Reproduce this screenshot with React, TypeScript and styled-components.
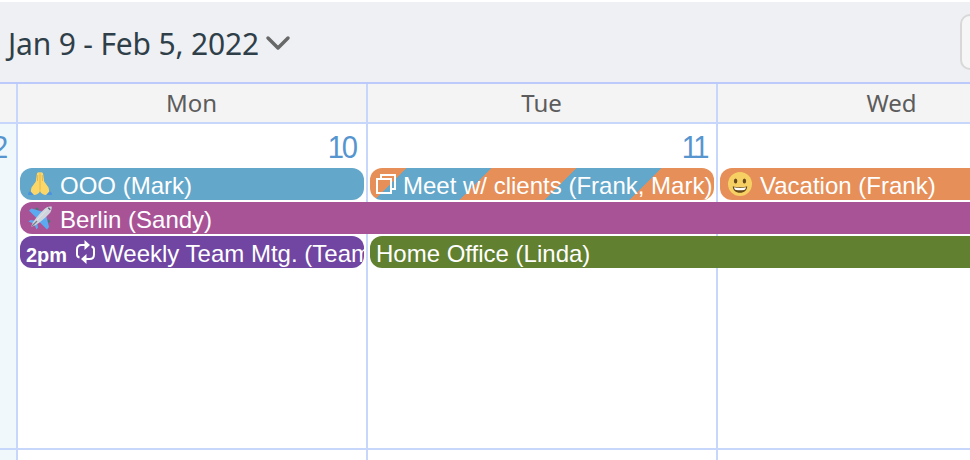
import React from "react";
import styled, { createGlobalStyle } from "styled-components";

const GlobalStyle = createGlobalStyle`
  html, body { margin: 0; background: #fff; overflow: hidden; }
  *, *::before, *::after { box-sizing: border-box; }
`;

const line = "#c6d7fb";

const Page = styled.main`
  width: 970px;
  height: 460px;
  padding-top: 2px;
  overflow: hidden;
  display: flex;
  flex-direction: column;
  font-family: "Liberation Sans", Arial, sans-serif;
`;

const Toolbar = styled.header`
  flex: none;
  height: 82px;
  background: #eff0f3;
  border-bottom: 2px solid #bccafb;
  display: flex;
  align-items: center;
  justify-content: space-between;
  padding-left: 8px;
`;

const RangeButton = styled.div`
  display: flex;
  align-items: center;
  gap: 8px;
`;

const Title = styled.h1`
  margin: 3px 0 0;
  width: 250px;
  white-space: nowrap;
  font: 400 30px/40px "Noto Sans", "Open Sans", sans-serif;
  letter-spacing: -0.17px;
  color: #2f3f49;
`;

const ToolButton = styled.div`
  flex: none;
  width: 60px;
  height: 56px;
  margin: 0 -50px 1px 0;
  border: 2px solid #d8d8d8;
  border-radius: 10px;
  background: #f6f6f6;
`;

const columns = "18px repeat(3, 350px)";

const DayHeader = styled.div`
  flex: none;
  display: grid;
  grid-template-columns: ${columns};
  height: 40px;
  background: #f4f4f4;
  border-bottom: 2px solid ${line};
`;

const DayName = styled.div`
  border-right: 2px solid ${line};
  text-align: center;
  font: 400 24px/37px "Noto Sans", "Open Sans", sans-serif;
  padding-right: 1px;
  color: #5c5c5c;
`;

const Week = styled.section`
  flex: none;
  display: grid;
  grid-template-columns: ${columns};
  grid-template-rows: 44px repeat(3, 32px) 1fr;
  row-gap: 2px;
  height: 326px;
  border-bottom: 2px solid ${line};
`;

const DayCell = styled.div<{ $col: number; $weekend?: boolean }>`
  grid-column: ${(p) => p.$col};
  grid-row: 1 / -1;
  border-right: 2px solid ${line};
  background: ${(p) => (p.$weekend ? "#f0f8fc" : "#fff")};
  display: flex;
  justify-content: flex-end;
  padding-right: 9px;
`;

const DayNumber = styled.span<{ $spacing?: number; $shift?: number }>`
  font-size: 31px;
  line-height: 48px;
  letter-spacing: ${(p) => p.$spacing ?? -1}px;
  margin-right: ${(p) => p.$shift ?? 0}px;
  color: #5795cf;
  transform: scaleX(0.94);
  transform-origin: right;
`;

const EventBar = styled.div<{ $col: number; $end: number; $row: number; $bg: string; $open?: boolean }>`
  grid-column: ${(p) => p.$col} / ${(p) => p.$end};
  grid-row: ${(p) => p.$row};
  margin: -2px ${(p) => (p.$open ? "0" : "4px")} 2px 2px;
  height: 32px;
  border-radius: ${(p) => (p.$open ? "12px 0 0 12px" : "12px")};
  background: ${(p) => p.$bg};
  display: flex;
  align-items: center;
  padding-left: 6px;
  overflow: hidden;
  white-space: nowrap;
  color: #fff;
`;

const EventText = styled.span<{ $gap?: number }>`
  margin-left: ${(p) => p.$gap ?? 0}px;
  font-size: 24px;
  line-height: 36px;
  padding-top: 3px;
`;

const EventTime = styled.b`
  font-size: 20px;
  line-height: 36px;
  padding-top: 5px;
  margin-right: 9px;
`;

const Icon = styled.svg`
  flex: none;
  display: block;
  overflow: visible;
`;

const Emoji = styled(Icon)`
  width: 24px;
  height: 24px;
  margin-left: 2px;
`;

const NextWeek = styled(Week)`
  height: 10px;
  grid-template-rows: 10px;
  border-bottom: 0;
`;

const Chevron = () => (
  <Icon width="24" height="14" viewBox="0 0 24 14">
    <path d="M2 3 12 13 22 3" fill="none" stroke="#686868" strokeWidth="3.500" strokeLinecap="round" strokeLinejoin="round" />
  </Icon>
);

const Hands = () => (
  <Emoji viewBox="0 0 24 24">
    <path d="M0 22.500c0-2 1.500-3.500 4-4L9 23H0zM24 22.500c0-2-1.500-3.500-4-4L15 23h9z" fill="#4a94df" />
    <path d="M11.800.500C9.800 0 9 1 8.800 2.500L7.800 9.500 3.500 15.500 2.700 19.500 6 23c3-.200 5-1.500 6-4 1 2.500 3 3.800 6 4l3.300-3.500-.800-4L16.200 9.500 15.200 2.500C15 1 14.200 0 12.200.500z" fill="#fbd768" />
    <path d="M12 1.500v17M9.800 3 9.400 9M14.200 3l.4 6" fill="none" stroke="#e2b24e" strokeWidth=".9" />
  </Emoji>
);

const Plane = () => (
  <Emoji viewBox="0 0 24 24">
    <path d="m7 2.500 2-1 2 1.500-1 2zM19.500 14l2-.5 1 2-2 2z" fill="#477b78" />
    <path d="M1 4.500 3.500 2.500 17 6.500l-6 8zM19 23.500l2-2.500L17.500 7l-8 7z" fill="#5baaf0" />
    <path d="m.500 15.500 2-1.500 6 1-2 3zM8.500 23.500l1.500-2-1-6-3 2z" fill="#5baaf0" />
    <path d="M3.500 20.500C3.500 16 15.500 3 18.500 1.500 20.500.5 23.200.2 23.600.6s.1 3.100-.9 5.100C21.200 8.700 8 20.500 3.500 20.500Z" fill="#cfd4dc" />
    <path d="M6 17.500C9 14 15 7.500 19.500 3" stroke="#dfe4e9" strokeWidth="1" fill="none" />
    <path d="m20.300 1.800 2 2" stroke="#596779" strokeWidth="1.300" />
    <path d="m4 20 5-5" stroke="#737c8c" strokeWidth="1.200" />
  </Emoji>
);

const Smile = () => (
  <Emoji viewBox="0 0 24 24">
    <circle cx="12" cy="12" r="12" fill="#f7d063" />
    <ellipse cx="7.600" cy="9" rx="1.700" ry="2.500" fill="#67491f" />
    <ellipse cx="16.400" cy="9" rx="1.700" ry="2.500" fill="#67491f" />
    <path d="M4.800 14.200c4 1.300 10.400 1.300 14.400 0 0 4-3 6.500-7.200 6.500s-7.200-2.500-7.200-6.500Z" fill="#644817" />
    <path d="M6 15.200c3.500 1 8.500 1 12 0-.3 2-1 2.600-2 2.700-2.500.4-5.500.4-8 0-1-.1-1.700-.7-2-2.700Z" fill="#fff" />
  </Emoji>
);

const Stack = () => (
  <Icon width="21" height="21" viewBox="0 0 21 21" fill="none" stroke="#fff" strokeWidth="2">
    <path d="M5 5V1h14v14h-4M1 5h14v14H1z" />
  </Icon>
);

const Repeat = () => (
  <Icon width="19" height="24" viewBox="0 0 19 24">
    <path d="M3.500 17.500Q1 17 1 14.500V9.500Q1 5 5.500 5H9.500M15.500 6.500Q18 7 18 9.500v5Q18 19 13.500 19H9.500" fill="none" stroke="#fff" strokeWidth="2" />
    <path d="m8.500 0 5.500 5-5.500 5zM10.500 14 5 19l5.500 5z" fill="#fff" />
  </Icon>
);

const blue = "#63a7ca";
const orange = "#e68f59";
const stripes = `repeating-linear-gradient(-45deg, ${orange} 0 60px, ${blue} 60px 120px)`;

export default function App() {
  return (
    <Page>
      <GlobalStyle />
      <Toolbar>
        <RangeButton>
          <Title>Jan 9 - Feb 5, 2022</Title>
          <Chevron />
        </RangeButton>
        <ToolButton />
      </Toolbar>
      <DayHeader>
        <DayName />
        <DayName>Mon</DayName>
        <DayName>Tue</DayName>
        <DayName>Wed</DayName>
      </DayHeader>
      <Week>
        <DayCell $col={1} $weekend><DayNumber>2</DayNumber></DayCell>
        <DayCell $col={2}><DayNumber $spacing={-2.5} $shift={1.5}>10</DayNumber></DayCell>
        <DayCell $col={3}><DayNumber $spacing={-2.5}>11</DayNumber></DayCell>
        <DayCell $col={4} />
        <EventBar $col={2} $end={3} $row={2} $bg={blue}>
          <Hands /><EventText $gap={8}>OOO (Mark)</EventText>
        </EventBar>
        <EventBar $col={3} $end={4} $row={2} $bg={stripes}>
          <Stack /><EventText $gap={6}>Meet w/ clients (Frank, Mark)</EventText>
        </EventBar>
        <EventBar $col={4} $end={5} $row={2} $bg={orange}>
          <Smile /><EventText $gap={8}>Vacation (Frank)</EventText>
        </EventBar>
        <EventBar $col={2} $end={5} $row={3} $bg="#a95397" $open>
          <Plane /><EventText $gap={8}>Berlin (Sandy)</EventText>
        </EventBar>
        <EventBar $col={2} $end={3} $row={4} $bg="#7046a2">
          <EventTime>2pm</EventTime><Repeat /><EventText $gap={6}>Weekly Team Mtg. (Team)</EventText>
        </EventBar>
        <EventBar $col={3} $end={5} $row={4} $bg="#618030" $open>
          <EventText>Home Office (Linda)</EventText>
        </EventBar>
      </Week>
      <NextWeek>
        <DayCell $col={1} $weekend />
        <DayCell $col={2} />
        <DayCell $col={3} />
        <DayCell $col={4} />
      </NextWeek>
    </Page>
  );
}
